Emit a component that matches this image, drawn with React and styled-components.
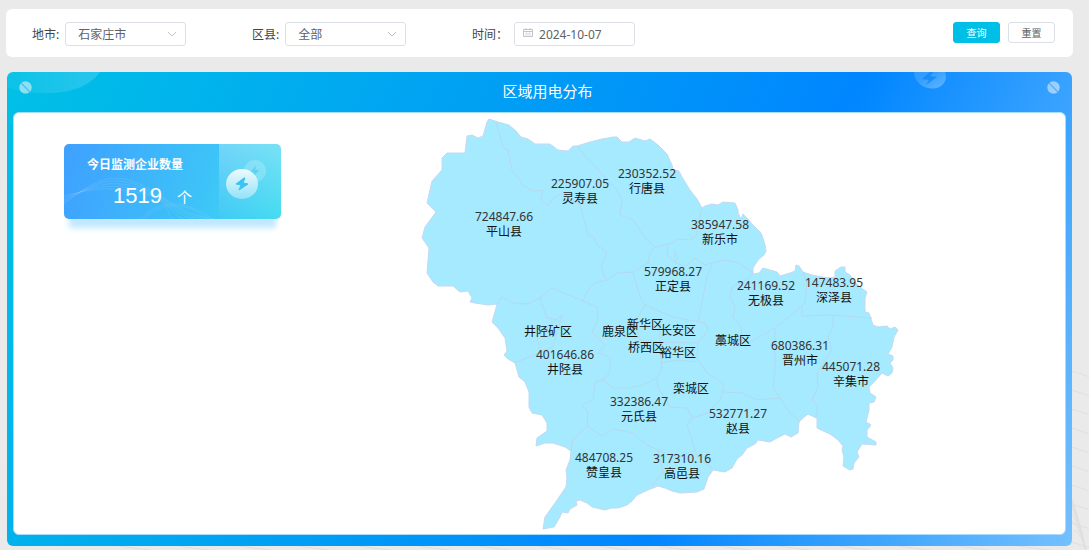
import React, { useState } from 'react';
import styled, { createGlobalStyle } from 'styled-components';

const CITIES = ['石家庄市', '唐山市', '保定市'];
const COUNTIES = ['全部', '平山县', '灵寿县', '行唐县', '正定县'];

const regions = [
    { name: '平山县', value: '724847.66', x: 504, y: 221 },
    { name: '灵寿县', value: '225907.05', x: 580, y: 188 },
    { name: '行唐县', value: '230352.52', x: 647, y: 178 },
    { name: '新乐市', value: '385947.58', x: 720, y: 229 },
    { name: '正定县', value: '579968.27', x: 673, y: 276 },
    { name: '无极县', value: '241169.52', x: 766, y: 290 },
    { name: '深泽县', value: '147483.95', x: 834, y: 287 },
    { name: '井陉矿区', x: 548, y: 336 },
    { name: '鹿泉区', x: 620, y: 336 },
    { name: '新华区', x: 645, y: 329 },
    { name: '长安区', x: 678, y: 335 },
    { name: '桥西区', x: 646, y: 352 },
    { name: '裕华区', x: 678, y: 357 },
    { name: '藁城区', x: 733, y: 345 },
    { name: '栾城区', x: 691, y: 393 },
    { name: '井陉县', value: '401646.86', x: 565, y: 359 },
    { name: '晋州市', value: '680386.31', x: 800, y: 350 },
    { name: '辛集市', value: '445071.28', x: 851, y: 371 },
    { name: '元氏县', value: '332386.47', x: 639, y: 406 },
    { name: '赵县', value: '532771.27', x: 738, y: 418 },
    { name: '赞皇县', value: '484708.25', x: 604, y: 462 },
    { name: '高邑县', value: '317310.16', x: 682, y: 463 },
];

const OUTLINE = `489,119 498,122 509,125 516,131 521,137 528,139 535,144 543,144 550,144 558,150 568,151 573,146
577,146 590,142 602,139 613,137 617,137 622,142 629,142 635,138 645,141 650,139 658,145 667,154 672,165
673,170 679,171 682,177 690,190 697,199 702,208 705,206 712,204 718,205 723,202 735,203 738,210 738,213
741,219 743,214 747,218 753,225 761,233 763,238 765,245 766,251 764,255 758,260 753,268 753,274 759,273
763,268 770,270 777,272 780,276 790,273 795,271 796,265 799,266 803,272 812,275 822,277 830,278 835,277
835,271 841,267 845,267 845,272 850,275 855,282 860,287 867,292 865,298 865,312 869,313 873,325 878,327
887,326 890,329 895,327 898,330 894,337 892,347 888,354 893,356 893,360 890,363 893,368 892,373 888,376
882,373 875,381 869,387 870,393 876,397 874,402 869,403 869,410 866,422 871,425 867,430 867,437 876,442
876,445 862,444 857,452 859,457 854,463 853,469 850,470 843,466 844,457 842,450 843,446 838,440 830,434
821,430 817,428 817,418 814,417 808,414 803,418 799,422 798,433 791,437 785,434 777,438 770,442 758,440
755,444 747,448 742,455 737,459 732,468 725,472 713,470 708,477 704,489 697,492 680,493 672,491 665,488
658,486 648,490 637,495 632,501 627,505 618,508 612,508 605,510 592,507 587,503 580,500 576,501 577,505
570,509 568,513 562,512 560,517 554,527 543,529 545,517 555,503 566,487 567,478 566,470 570,460 571,451
565,447 553,443 545,443 536,446 537,438 547,431 547,423 542,415 532,413 529,407 529,392 525,382 519,377
515,363 508,359 504,355 507,351 505,338 498,328 492,322 496,308 497,304 488,305 475,303 470,302 472,298
468,291 460,292 453,286 438,286 433,282 427,273 429,248 422,238 425,227 436,212 427,203 432,181 442,170
442,158 447,153 465,153 467,136 472,135 478,138 483,136 487,122`;

const BORDERS = [
    '496,122 503,148 508,150 512,170 520,180 522,185 533,191 543,190 541,199 548,206 553,198 563,193 580,205 585,223 588,235 594,237 597,245 607,252 601,267 606,280',
    '577,146 587,158 603,175 617,190 622,200 620,215 633,220 645,238 655,247 665,245 673,243 678,239 690,240 697,235 697,225 702,209',
    '655,247 650,253 648,263 633,272 617,273 607,280 595,283 587,292 583,301',
    '668,246 667,255 675,262 685,267 695,258 705,265 723,260 737,262 753,273',
    '675,262 678,258 675,252 674,259',
    '712,264 707,277 703,297 698,323',
    '753,274 743,282 732,287 730,297 735,307 733,317 741,327 742,340 750,342 775,328 795,312 805,303 807,283 803,272',
    '802,305 802,316 830,315 872,318',
    '775,328 775,370 773,387 780,398 790,413 799,421',
    '833,317 833,327 828,337 832,350 825,360 817,373 818,387 812,400 817,405 817,418',
    '780,398 757,400 742,393 723,392 723,383 707,373 697,358 698,343 708,330 705,323 673,317 645,305 640,297 633,272',
    '723,392 720,400 708,413 692,418 687,408 670,407 665,398 658,388 657,378',
    '692,418 687,425 692,440 695,450 697,457 712,468',
    '695,450 683,455 675,458 658,450 663,473 652,485',
    '658,450 647,445 633,433 613,429 602,436 587,426 573,440 571,451',
    '587,426 588,412 582,405 593,400 595,382 603,380 613,388 628,388 643,385 657,378 662,367 660,353 660,318',
    '603,380 610,372 610,357 598,353 605,345 592,332 598,320 597,307 583,301',
    '515,363 540,352 537,337 547,328 562,315 560,322 553,347 540,352',
    '497,304 501,297 513,303 528,304 540,298 552,288 583,301',
    '540,298 547,318 559,320',
    '645,305 635,322 640,340 660,342 698,343',
    '660,363 678,360 697,362',
];

const Lightning = props => (
    <path d="M15 3 3 15h8L9 23 21 11h-8z" strokeLinejoin="round" {...props} />
);

const Waves = () => (
    <WaveArt viewBox="0 0 1089 190" preserveAspectRatio="xMaxYMax slice" aria-hidden="true">
        {Array.from({ length: 10 }, (_, i) => (
            <path key={i} d={`M1040 ${i * 19 + 6}Q1075 ${i * 19 + 8} 1110 ${i * 19 + 26}`} />
        ))}
        {Array.from({ length: 7 }, (_, i) => (
            <path key={i} d={`M${1062 + i * 2} ${116 + i * 9}Q${1076 + i} ${142 + i * 5} 1087 196`} />
        ))}
        {Array.from({ length: 16 }, (_, i) => (
            <path key={i} d={`M${92 + i * 60} 180Q${120 + i * 60} 188 ${170 + i * 60} 192`} />
        ))}
    </WaveArt>
);

const NoEntry = () => (
    <Knob viewBox="0 0 13 13" aria-hidden="true">
        <circle cx="6.500" cy="6.500" r="6.200" fill="#fff" opacity="0.5" />
        <path d="M2.200 2.200 10.800 10.800" stroke="#1690e6" strokeWidth="1.100" opacity="0.6" />
    </Knob>
);

const SelectField = ({ id, label, options }) => (
    <Field>
        <Label htmlFor={id}>{label}</Label>
        <Control>
            <Select id={id}>
                {options.map(o => <option key={o}>{o}</option>)}
            </Select>
            <Chevron viewBox="0 0 10 6" aria-hidden="true">
                <path d="m1 1 4 4 4-4" fill="none" stroke="#c0c4cc" />
            </Chevron>
        </Control>
    </Field>
);

const RegionMap = () => (
    <Map viewBox="412 113 500 420" role="img" aria-label="区域用电分布">
        <polygon points={OUTLINE} fill="#a5eaff" stroke="#c3d9f2" strokeLinejoin="round" />
        {BORDERS.map(points => (
            <polyline key={points} points={points} fill="none" stroke="#b5d9ee" strokeLinejoin="round" />
        ))}
        {regions.map(r => (
            <React.Fragment key={r.name}>
                {r.value && <MapText $number x={r.x} y={r.y}>{r.value}</MapText>}
                <MapText x={r.x} y={r.value ? r.y + 15 : r.y}>{r.name}</MapText>
            </React.Fragment>
        ))}
    </Map>
);

export default () => {
    const [date, setDate] = useState('2024-10-07');

    return (
        <Page>
            <GlobalStyle />
            <Waves />
            <FilterBar onSubmit={e => e.preventDefault()}>
                <SelectField id="city" label="地市:" options={CITIES} />
                <SelectField id="county" label="区县:" options={COUNTIES} />
                <Field>
                    <Label htmlFor="date">时间：</Label>
                    <Control>
                        <DateInput id="date" value={date} onChange={e => setDate(e.target.value)} />
                        <Calendar viewBox="0 0 10 10" aria-hidden="true">
                            <path d="M.5 1.500h9v7h-9zM.5 3.500h9M3 0v2M7 0v2" fill="none" stroke="#c0c4cc" />
                            <path d="M2 5.500h6M2 7h6M3.500 4v5M6.500 4v5" fill="none" stroke="#d8dbe2" strokeWidth="0.700" />
                        </Calendar>
                    </Control>
                </Field>
                <Actions>
                    <Button type="submit" $primary>查询</Button>
                    <Button type="button" onClick={() => setDate('2024-10-07')}>重置</Button>
                </Actions>
            </FilterBar>
            <Panel>
                <PanelHeader>
                    <Glow viewBox="0 0 93 22" aria-hidden="true">
                        <defs>
                            <linearGradient id="glow">
                                <stop offset="0" stopColor="#fff" stopOpacity="0.040" />
                                <stop offset="1" stopColor="#fff" stopOpacity="0.160" />
                            </linearGradient>
                        </defs>
                        <path d="M0 0h93C82 15 62 21 42 21 26 21 10 20 0 15z" fill="url(#glow)" />
                    </Glow>
                    <Coin viewBox="0 0 34 18" aria-hidden="true">
                        <defs>
                            <linearGradient id="coin" x1="0" y1="0" x2="1" y2="1">
                                <stop offset="0.300" stopColor="#fff" stopOpacity="0.140" />
                                <stop offset="1" stopColor="#fff" stopOpacity="0.320" />
                            </linearGradient>
                        </defs>
                        <path d="M1 0h31c2 5 1 10-4 14-6 4-15 3-20-1C3 9 1 5 1 0z" fill="url(#coin)" />
                        <path d="M19-2 9 7l7 1-3 5 11-8-7-1 5-6z" fill="#0a84f5" opacity="0.700" />
                    </Coin>
                    <NoEntry />
                    <Title>区域用电分布</Title>
                    <NoEntry />
                </PanelHeader>
                <PanelBody>
                    <StatCard>
                        <CardLines viewBox="0 0 154 75" aria-hidden="true">
                            {[0, 2, 4, 6, 8].map(n => (
                                <path key={n} d={`M0 ${60 - n}C30 ${36 + n} 50 ${26 + n * 2} 80 ${42 + n}S${116 - n * 2} 70 ${150 - n * 5} 75`} />
                            ))}
                            <path d="M76 75C100 52 125 58 148 75M79 75C102 55 125 60 144 75" />
                        </CardLines>
                        <StatText>
                            <StatLabel>今日监测企业数量</StatLabel>
                            <StatValue>1519 <Unit>个</Unit></StatValue>
                        </StatText>
                        <StatIcon>
                            <svg width="42" height="40" viewBox="0 0 42 40" aria-hidden="true">
                                <defs>
                                    <linearGradient id="disc" x1="0" y1="0" x2="0" y2="1">
                                        <stop offset="0" stopColor="#eefbff" />
                                        <stop offset="1" stopColor="#93e2f8" />
                                    </linearGradient>
                                </defs>
                                <circle cx="30" cy="11" r="11" fill="#fff" opacity="0.200" />
                                <Lightning transform="translate(23 4) scale(.55)" fill="#4bcdf0" opacity="0.700" />
                                <ellipse cx="17" cy="24" rx="16" ry="15" fill="url(#disc)" />
                                <path d="m19 18-8 6 5 1-2 5 9-6-5-1 2-5z" fill="#3dc3f2" stroke="#3dc3f2" strokeLinejoin="round" />
                            </svg>
                        </StatIcon>
                    </StatCard>
                    <MapArea>
                        <RegionMap />
                    </MapArea>
                </PanelBody>
            </Panel>
        </Page>
    );
}

const GlobalStyle = createGlobalStyle`
    *, *::before, *::after {
        box-sizing: border-box;
    }

    body {
        margin: 0;
        background: #eaeaea;
    }

    body, button, input, select {
        font-family: 'Noto Sans', 'Noto Sans CJK SC', sans-serif;
    }
`;

const Page = styled.div`
    position: relative;
    display: flex;
    flex-direction: column;
    gap: 15px;
    min-height: 100vh;
    padding: 9px 16px 4px 6px;
    font-size: 12px;
    color: #606266;
`;

const WaveArt = styled.svg`
    position: absolute;
    right: 0;
    bottom: 0;
    width: 100%;
    height: 190px;
    fill: none;
    stroke: #dfdfdf;
`;

const FilterBar = styled.form`
    position: relative;
    display: flex;
    align-items: flex-start;
    padding: 13px 18px 11px 26px;
    background: #fff;
    border-radius: 6px;
`;

const Field = styled.div`
    display: flex;
    align-items: center;
    gap: 6px;
    flex: 0 0 220px;
`;

const Label = styled.label`
    color: #444;
    white-space: nowrap;
`;

const Control = styled.div`
    position: relative;
    width: 121px;
`;

const Select = styled.select`
    display: block;
    width: 100%;
    height: 24px;
    padding: 0 24px 0 12px;
    appearance: none;
    font-size: 12px;
    color: #606266;
    background: #fff;
    border: 1px solid #dcdfe6;
    border-radius: 3px;
    outline: none;
`;

const DateInput = styled.input`
    display: block;
    width: 100%;
    height: 24px;
    padding: 0 8px 0 24px;
    font-size: 12px;
    color: #606266;
    background: #fff;
    border: 1px solid #dcdfe6;
    border-radius: 3px;
    outline: none;
`;

const Chevron = styled.svg`
    position: absolute;
    top: 9px;
    right: 9px;
    width: 10px;
    height: 6px;
    pointer-events: none;
`;

const Calendar = styled.svg`
    position: absolute;
    top: 6px;
    left: 9px;
    width: 10px;
    height: 10px;
`;

const Actions = styled.div`
    display: flex;
    gap: 8px;
    margin-left: auto;
`;

const Button = styled.button`
    width: 47px;
    height: 21px;
    padding: 0;
    font-size: 10px;
    line-height: 18px;
    color: ${props => props.$primary ? '#fff' : '#606266'};
    background: ${props => props.$primary ? '#00bfe6' : '#fff'};
    border: 1px solid ${props => props.$primary ? '#00bfe6' : '#dcdfe6'};
    border-radius: 3px;
    cursor: pointer;
`;

const Panel = styled.section`
    position: relative;
    flex: 1;
    display: flex;
    flex-direction: column;
    margin: 0 1px;
    padding: 0 6px 11px;
    overflow: hidden;
    background: linear-gradient(115deg, #00c1e6 0%, #0086ff 67%, #74c0ff 100%);
    border-radius: 6px;
`;

const PanelHeader = styled.header`
    display: flex;
    justify-content: space-between;
    height: 40px;
    padding: 9px 6px 0;
`;

const Title = styled.h1`
    margin: 0;
    padding-left: 16px;
    font-size: 15px;
    font-weight: 400;
    line-height: 20px;
    color: #fff;
`;

const Knob = styled.svg`
    width: 13px;
    height: 13px;
`;

const Glow = styled.svg`
    position: absolute;
    top: 0;
    left: 0;
    width: 93px;
    height: 22px;
`;

const Coin = styled.svg`
    position: absolute;
    top: 0;
    right: 125px;
    width: 34px;
    height: 18px;
`;

const PanelBody = styled.div`
    flex: 1;
    display: flex;
    align-items: flex-start;
    padding: 0 22px 0 50px;
    background: #fff;
    border: 1px solid #a8dcfb;
    border-radius: 6px;
`;

const StatCard = styled.div`
    position: relative;
    display: flex;
    flex: 0 0 217px;
    height: 75px;
    margin-top: 31px;
    color: #fff;
    background: linear-gradient(105deg, #3fa0ff 0%, #3dc4f7 65%, #46dcf0 100%);
    border-radius: 5px;
    box-shadow: 0 14px 6px -5px #c0e8ff;
`;

const CardLines = styled.svg`
    position: absolute;
    left: 0;
    bottom: 0;
    width: 154px;
    height: 75px;
    fill: none;
    stroke: #fff;
    stroke-opacity: 0.1;
`;

const StatText = styled.div`
    position: relative;
    flex: 1;
    padding-top: 11px;
`;

const StatLabel = styled.div`
    padding-left: 23px;
    font-weight: 700;
    line-height: 20px;
`;

const StatValue = styled.div`
    display: flex;
    align-items: baseline;
    gap: 15px;
    padding: 7px 0 0 49px;
    font-family: 'Liberation Sans', 'Noto Sans CJK SC', sans-serif;
    font-size: 22px;
    line-height: 28px;
`;

const Unit = styled.span`
    font-size: 15px;
`;

const StatIcon = styled.div`
    display: flex;
    align-items: center;
    justify-content: center;
    width: 62px;
    padding: 0 8px 4px 0;
    background: linear-gradient(180deg, rgba(255, 255, 255, 0.28), rgba(255, 255, 255, 0));
    border-radius: 0 5px 5px 0;
`;

const MapArea = styled.div`
    flex: 1;
    display: flex;
    justify-content: center;
`;

const Map = styled.svg`
    width: 100%;
    max-width: 500px;
`;

const MapText = styled.text`
    font-size: 12px;
    text-anchor: middle;
    fill: ${props => props.$number ? '#333' : '#111'};
`;
